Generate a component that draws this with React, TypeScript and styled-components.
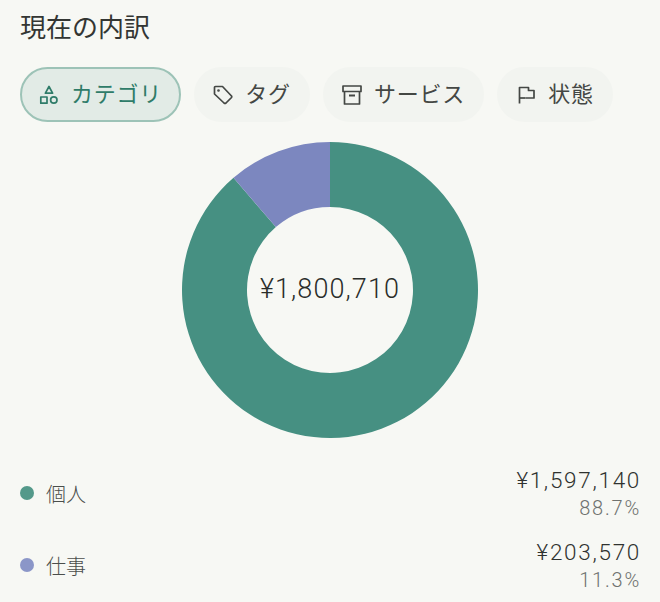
import type { ReactNode } from 'react';
import styled, { createGlobalStyle } from 'styled-components';

const GlobalStyle = createGlobalStyle`
  html, body {
    margin: 0;
    padding: 0;
    background: #f7f8f4;
  }
  body {
    font-family: Roboto, "Noto Sans CJK JP", sans-serif;
    color: #3c3f3d;
  }
`;

const Page = styled.div`
  width: 660px;
  height: 602px;
  box-sizing: border-box;
  padding: 11px 20px 0;
  overflow: hidden;
`;

const Title = styled.h2`
  margin: 0;
  font-size: 26px;
  line-height: 34px;
  font-weight: 400;
  color: #333633;
`;

const Chips = styled.div`
  display: flex;
  gap: 13px;
  margin-top: 22px;
`;

const Chip = styled.div<{ $active?: boolean; $width: number }>`
  width: ${(p) => p.$width}px;
  height: 55px;
  box-sizing: border-box;
  border-radius: 28px;
  display: flex;
  align-items: center;
  justify-content: center;
  gap: 12px;
  font-size: 22px;
  letter-spacing: 0.7px;
  background: ${(p) => (p.$active ? '#e2ebe6' : '#f2f4f0')};
  border: 2px solid ${(p) => (p.$active ? '#9dc3b7' : '#f2f4f0')};
  color: ${(p) => (p.$active ? '#2f7c69' : '#444744')};
`;

const ChipLabel = styled.span`
  padding-bottom: 6px;
`;

const Chart = styled.div`
  display: flex;
  justify-content: center;
  margin-top: 20px;
  position: relative;
`;

const Total = styled.div`
  position: absolute;
  inset: 0 0 3px;
  display: flex;
  align-items: center;
  justify-content: center;
  font-size: 27px;
  font-weight: 300;
  letter-spacing: 1.1px;
  color: #2a2d2a;
`;

const Legend = styled.div`
  margin-top: 25px;
  display: flex;
  flex-direction: column;
  gap: 13px;
`;

const Row = styled.div`
  display: flex;
  align-items: center;
  justify-content: space-between;
  height: 59px;
`;

const Name = styled.div`
  display: flex;
  align-items: center;
  gap: 12px;
  font-size: 20px;
  font-weight: 300;
  color: #4b4e4b;
`;

const NameText = styled.span`
  padding-top: 2px;
`;

const Dot = styled.span<{ $color: string }>`
  width: 14px;
  height: 14px;
  border-radius: 50%;
  background: ${(p) => p.$color};
`;

const Values = styled.div`
  display: flex;
  flex-direction: column;
  align-items: flex-end;
`;

const Amount = styled.div`
  font-size: 22.5px;
  font-weight: 300;
  line-height: 30px;
  letter-spacing: 1.7px;
  margin-right: -1px;
  color: #2f322f;
`;

const Percent = styled.div`
  font-size: 20px;
  font-weight: 300;
  line-height: 26px;
  letter-spacing: 1.8px;
  margin-right: -1px;
  color: #6f726f;
`;

const Icon = ({ children }: { children: ReactNode }) => (
  <svg
    width="20"
    height="20"
    viewBox="0 0 20 20"
    fill="none"
    stroke="currentColor"
    strokeWidth="1.7"
    strokeLinejoin="round"
    style={{ flexShrink: 0 }}>
    {children}
  </svg>
);

const ShapesIcon = () => (
  <Icon>
    <path d="M10 1.5 13.6 8.2H6.4Z" />
    <rect x="1.8" y="12" width="6.2" height="6.2" />
    <circle cx="14.8" cy="15" r="3.2" />
  </Icon>
);

const TagIcon = () => (
  <Icon>
    <path d="M1.5 2.5Q1.5 1.5 2.5 1.5H9.5L18.5 11Q19 11.8 18.5 12.5L13 18Q12 18.8 11 18L1.5 9Z" />
    <circle cx="5.5" cy="5.5" r="0.5" fill="currentColor" />
  </Icon>
);

const BoxIcon = () => (
  <Icon>
    <rect x="1" y="1" width="18" height="5.5" />
    <path d="M2.5 6.5V19H17.5V6.5" />
    <path d="M7 10.5H13" strokeWidth="2" />
  </Icon>
);

const FlagIcon = () => (
  <Icon>
    <path d="M3.5 18.5V2.5H12.5V5.5H18V13H9.5" />
    <path d="M3.5 13H9.5" />
  </Icon>
);

const chips = [
  { label: 'カテゴリ', icon: ShapesIcon, width: 161, active: true },
  { label: 'タグ', icon: TagIcon, width: 116 },
  { label: 'サービス', icon: BoxIcon, width: 161 },
  { label: '状態', icon: FlagIcon, width: 116 },
];

const rows = [
  { name: '個人', amount: '¥1,597,140', percent: '88.7%', color: '#54998a' },
  { name: '仕事', amount: '¥203,570', percent: '11.3%', color: '#8b96c8' },
];

// 円グラフの扇形
const slice = (from: number, to: number) => {
  const pt = (r: number, a: number) => {
    const t = (a * Math.PI) / 180;
    return `${148 + r * Math.sin(t)} ${148 - r * Math.cos(t)}`;
  };
  const large = to - from > 180 ? 1 : 0;
  return `M${pt(148, from)}A148 148 0 ${large} 1 ${pt(148, to)}L${pt(83, to)}A83 83 0 ${large} 0 ${pt(83, from)}Z`;
};

const App = () => {
  return (
    <Page>
      <GlobalStyle />
      <Title>現在の内訳</Title>
      <Chips>
        {chips.map((c) => (
          <Chip key={c.label} $active={c.active} $width={c.width}>
            <c.icon />
            <ChipLabel>{c.label}</ChipLabel>
          </Chip>
        ))}
      </Chips>
      <Chart>
        <svg width="296" height="296" viewBox="0 0 296 296">
          <path d={slice(0, 319.3)} fill="#469082" />
          <path d={slice(319.3, 360)} fill="#7c87bf" />
        </svg>
        <Total>¥1,800,710</Total>
      </Chart>
      <Legend>
        {rows.map((r) => (
          <Row key={r.name}>
            <Name>
              <Dot $color={r.color} />
              <NameText>{r.name}</NameText>
            </Name>
            <Values>
              <Amount>{r.amount}</Amount>
              <Percent>{r.percent}</Percent>
            </Values>
          </Row>
        ))}
      </Legend>
    </Page>
  );
};

export default App;
